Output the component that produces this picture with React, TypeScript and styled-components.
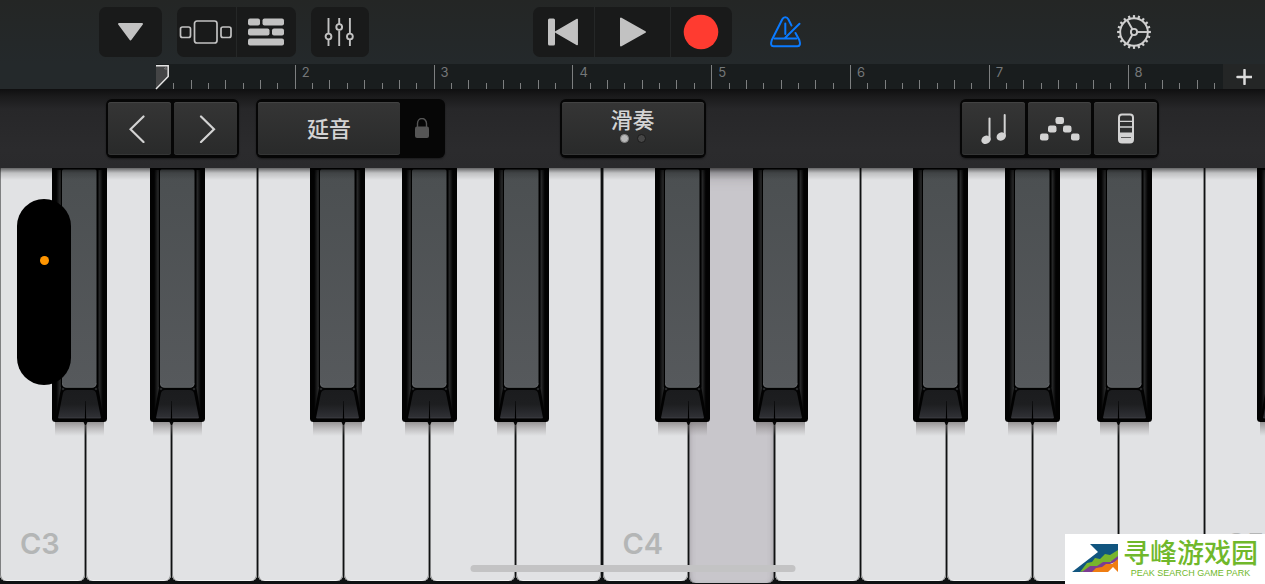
import React from "react";
import styled, { createGlobalStyle } from "styled-components";

const GlobalStyle = createGlobalStyle`
  * { box-sizing: border-box; }
  html, body, #root { height: 100%; margin: 0; }
  body {
    background: #111213;
    font-family: Inter, "Noto Sans CJK SC", "Liberation Sans", sans-serif;
    overflow: hidden;
  }
  button {
    margin: 0;
    padding: 0;
    border: 0;
    font: inherit;
    color: inherit;
    background: none;
    cursor: pointer;
  }
  svg { display: block; }
`;

const Screen = styled.main`
  position: relative;
  display: flex;
  flex-direction: column;
  height: 100vh;
  overflow: hidden;
`;

/* ---------- top toolbar ---------- */

const Toolbar = styled.header`
  flex: none;
  display: grid;
  grid-template-columns: 1fr auto 1fr;
  align-items: center;
  height: 64px;
  padding: 0 114px 0 99px;
  background: linear-gradient(#242625, #24292b);
  color: #c2c2c2;
`;

const ToolbarSide = styled.div`
  display: flex;
  align-items: center;
  gap: 15px;
`;

const ToolbarEnd = styled.div`
  display: flex;
  align-items: center;
  justify-content: space-between;
  padding-left: 37px;
`;

const ButtonGroup = styled.div<{ $shift?: boolean }>`
  display: flex;
  height: 50px;
  border-radius: 7px;
  overflow: hidden;
  background: #191a1a;
  margin-left: ${(p) => (p.$shift ? "15px" : "0")};
`;

const ToolButton = styled.button<{ $width: number }>`
  display: flex;
  align-items: center;
  justify-content: center;
  width: ${(p) => p.$width}px;
  & + & { border-left: 1px solid #252727; }
`;

const PlainButton = styled.button`
  display: flex;
  align-items: center;
  justify-content: center;
  width: 34px;
  height: 50px;
`;

/* ---------- ruler ---------- */

const RulerRow = styled.div`
  position: relative;
  flex: none;
  display: flex;
  height: 25px;
  padding-left: 156px;
  background: #24292b;
`;

const Timeline = styled.div`
  flex: 1;
  display: flex;
  background: #191d1e;
`;

const Bar = styled.div<{ $beats: number }>`
  position: relative;
  flex: ${(p) => p.$beats} 1 0;
  display: flex;
  align-items: flex-end;
`;

const Tick = styled.span<{ $height: number; $span: number }>`
  flex: ${(p) => p.$span} 1 0;
  height: ${(p) => p.$height}px;
  border-left: 1px solid #7d7f80;
`;

const BarNumber = styled.span`
  position: absolute;
  left: 7px;
  top: 0;
  font-size: 13px;
  line-height: 16px;
  color: #747778;
`;

const Playhead = styled.div`
  position: absolute;
  left: 155px;
  top: 0;
`;

const AddButton = styled.button`
  display: flex;
  align-items: center;
  justify-content: center;
  width: 42px;
  height: 25px;
  background: #242626;
  color: #dcdcdc;
`;

/* ---------- instrument controls ---------- */

const ControlBar = styled.section`
  flex: none;
  display: grid;
  grid-template-columns: 1fr auto 1fr;
  align-items: start;
  height: 79px;
  padding: 10px 106px 0;
  background: linear-gradient(#0f0f10, #1b1b1c 8px, #272729 20px, #2b2b2d 60px, #2a2a2c);
  color: #d3d3d3;
`;

const ControlSide = styled.div<{ $end?: boolean }>`
  display: flex;
  gap: 17px;
  justify-content: ${(p) => (p.$end ? "flex-end" : "flex-start")};
`;

const Frame = styled.div`
  display: flex;
  gap: 3px;
  height: 59px;
  padding: 3px 2px;
  border-radius: 6px;
  background: #060606;
  box-shadow: 0 1px 2px rgba(0, 0, 0, 0.4);
`;

const Pad = styled.button<{ $wide?: boolean }>`
  display: flex;
  flex-direction: column;
  align-items: center;
  justify-content: center;
  width: ${(p) => (p.$wide ? 142 : 63)}px;
  height: 53px;
  border-radius: 3px;
  background: linear-gradient(#353535, #292a2a);
  box-shadow: inset 0 1px 0 #434343, inset 0 -1px 0 #353636;
  font-size: 22px;
  line-height: 28px;
  font-weight: 500;
`;

const LockButton = styled.button`
  display: flex;
  align-items: center;
  justify-content: center;
  width: 40px;
  height: 53px;
  padding-right: 2px;
  color: #555;
`;

const Dots = styled.span`
  display: flex;
  gap: 8px;
  padding-bottom: 8px;
`;

const Dot = styled.span<{ $on?: boolean }>`
  width: 9px;
  height: 9px;
  border: 1px solid ${(p) => (p.$on ? "#858585" : "#1b1b1b")};
  border-radius: 50%;
  background: ${(p) => (p.$on ? "#b9b9b9" : "#464646")};
`;

/* ---------- keyboard ---------- */

const Keyboard = styled.section`
  position: relative;
  flex: 1;
  display: grid;
  grid-template-columns: 1205fr 1205fr 120fr;
  min-height: 0;
  overflow: hidden;
  background: #0f1112;
  &::after {
    content: "";
    position: absolute;
    inset: 0 0 auto;
    height: 12px;
    pointer-events: none;
    background: linear-gradient(rgba(0, 0, 0, 0.55), rgba(0, 0, 0, 0.15) 5px, transparent);
  }
`;

const Octave = styled.div<{ $partial?: boolean }>`
  position: relative;
  display: grid;
  grid-template-columns: ${(p) => (p.$partial ? "86px" : "repeat(7, 1fr)")};
  min-width: 0;
`;

const WhiteKey = styled.button<{ $pressed?: boolean }>`
  display: flex;
  align-items: flex-end;
  margin: 0 1px ${(p) => (p.$pressed ? 1 : 3)}px 0;
  padding: 0 20px 19px;
  border-radius: 0 0 6px 6px;
  background: ${(p) => (p.$pressed ? "#c8c6cb" : "#e1e2e4")};
  box-shadow: ${(p) =>
    p.$pressed
      ? "inset 1px 0 0 #6d6c70, inset -1px 0 0 #6d6c70, inset 4px 0 5px -3px #a5a3a8, inset -4px 0 5px -3px #a5a3a8, inset 0 16px 14px -8px #a19fa4"
      : "inset 1px 0 0 #7f8081, inset -1px 0 0 #8b8c8d, inset 0 -1px 0 #f5f5f5"};
  font-size: 29px;
  line-height: 36px;
  font-weight: 600;
  color: #b4b6b6;
`;

const BlackKey = styled.button<{ $left: number }>`
  position: absolute;
  top: 0;
  left: ${(p) => p.$left}%;
  width: 55px;
  height: 270px;
`;

/* ---------- overlays ---------- */

const CameraIsland = styled.div`
  position: absolute;
  left: 17px;
  top: 199px;
  width: 54px;
  height: 186px;
  border-radius: 27px;
  background: #000;
`;

const CameraDot = styled.span`
  position: absolute;
  left: 23px;
  top: 57px;
  width: 9px;
  height: 9px;
  border-radius: 50%;
  background: #ff9500;
`;

const HomeIndicator = styled.div`
  position: absolute;
  left: 50%;
  bottom: 12px;
  width: 325px;
  height: 7px;
  transform: translateX(-50%);
  border-radius: 4px;
  background: #c3c3c4;
`;

const Watermark = styled.aside`
  position: absolute;
  right: 0;
  bottom: 0;
  display: flex;
  gap: 4px;
  width: 200px;
  height: 50px;
  padding: 2px 0 0 7px;
  background: #fff;
  color: #70b82b;
`;

const WatermarkText = styled.div`
  display: flex;
  flex-direction: column;
  align-items: center;
  gap: 1px;
  white-space: nowrap;
`;

const WatermarkName = styled.strong`
  font: 500 27px/31px "Noto Sans CJK SC", sans-serif;
`;

const WatermarkTag = styled.span`
  font: 9px/10px "Liberation Sans", sans-serif;
`;

/* ---------- drawings ---------- */

const TriangleIcon = () => (
  <svg width="28" height="20" viewBox="0.500 0 28 20">
    <path d="M2.500 2h23L14 17.500z" fill="currentColor" stroke="currentColor" strokeWidth="2" strokeLinejoin="round" />
  </svg>
);

const BrowserIcon = () => (
  <svg width="56" height="26" viewBox="0 0 56 26" fill="none" stroke="currentColor" strokeWidth="1.700">
    <rect x="1.500" y="8" width="10" height="10.500" rx="2" />
    <rect x="15.500" y="2" width="22.500" height="22" rx="2.500" />
    <rect x="42" y="8" width="10" height="10.500" rx="2" />
  </svg>
);

const TracksIcon = () => (
  <svg width="38" height="28" viewBox="0 0 38 28" fill="currentColor">
    <rect width="12" height="7" y="0.500" rx="2" />
    <rect x="14.500" y="0.500" width="21.500" height="7" rx="2" />
    <rect y="10.500" width="21.500" height="7" rx="2" />
    <rect x="24" y="10.500" width="12" height="7" rx="2" />
    <rect y="20.500" width="36" height="7" rx="2" />
  </svg>
);

const MixerIcon = () => (
  <svg width="32" height="30" viewBox="0 0 32 30" fill="none" stroke="currentColor" strokeWidth="1.900">
    <path d="M4.500 1v15M4.500 22.500V29M15.200 1v6M15.200 13.500V29M25.900 1v15M25.900 22.500V29" />
    <circle cx="4.500" cy="19.500" r="2.900" />
    <circle cx="15.200" cy="10" r="2.900" />
    <circle cx="25.900" cy="19.500" r="2.900" />
  </svg>
);

const RewindIcon = () => (
  <svg width="34" height="28" viewBox="0 0 34 28" fill="currentColor">
    <rect x="1" y="0.500" width="7" height="27" rx="1.500" />
    <path d="M30.200 1.500v25L8.700 14z" stroke="currentColor" strokeWidth="1.500" strokeLinejoin="round" />
  </svg>
);

const PlayIcon = () => (
  <svg width="28" height="30" viewBox="0.500 0 28 30">
    <path d="M2.500 1.500v27L26.500 15z" fill="currentColor" stroke="currentColor" strokeWidth="2" strokeLinejoin="round" />
  </svg>
);

const RecordIcon = () => (
  <svg width="38" height="36" viewBox="0 0 38 36">
    <circle cx="18" cy="18" r="17.300" fill="#ff3b30" />
  </svg>
);

const MetronomeIcon = () => (
  <svg width="34" height="34" viewBox="0 0 34 34" fill="none" stroke="#0a7aff" strokeWidth="2" strokeLinecap="round" strokeLinejoin="round">
    <path d="M22.500 10.500 19.300 4.300Q18.300 2.300 16.300 2.300T13.300 4.300L2.800 25Q0.800 31.200 4.500 31.200H28.500Q32.300 31.200 30.300 25L26.500 18" />
    <path d="M5.500 23.500H27.500M16.300 8.500V19M16 23 30.500 8.800" />
  </svg>
);

const TEETH = Array.from({ length: 20 }, (_, i) => i * 18);

const GearIcon = () => (
  <svg width="34" height="34" viewBox="-17 -17 34 34" fill="none" stroke="#cfcfcf" strokeWidth="1.900">
    <circle r="13.800" />
    <circle r="3.100" />
    {TEETH.map((a) => (
      <path key={a} d="M14 0h2.900" strokeWidth="2.200" transform={`rotate(${a})`} />
    ))}
    {[0, 120, 240].map((a) => (
      <path key={a} d="M3.500 0H13.500" transform={`rotate(${a})`} />
    ))}
  </svg>
);

const PlayheadIcon = () => (
  <svg width="15" height="26" viewBox="0 0 15 26">
    <path d="M1 2h12v11L1 25z" fill="#444546" />
    <path d="M1 1.800h12.200v10.700L1 25" fill="none" stroke="#e4e4e4" strokeWidth="1.500" />
    <path d="M9 5 11 3.500V6" fill="none" stroke="#777" />
  </svg>
);

const PlusIcon = () => (
  <svg width="16" height="16" viewBox="0 0 16 16">
    <path d="M8.500 1v14M1.500 8h14" stroke="currentColor" strokeWidth="2.500" strokeLinecap="round" />
  </svg>
);

const ChevronIcon = ({ right }: { right?: boolean }) => (
  <svg width="22" height="28" viewBox="0 0 22 28" fill="none" stroke="currentColor" strokeWidth="2.200" strokeLinecap="round">
    <path d={right ? "M6 1.500 19 14.200 6 27" : "M14.500 1.500 1.500 14.200 14.500 27"} />
  </svg>
);

const LockIcon = () => (
  <svg width="16" height="22" viewBox="0 1 16 22">
    <path d="M3.500 10V6.500a4.500 5 0 0 1 9 0V10" fill="none" stroke="currentColor" strokeWidth="1.400" />
    <rect x="1" y="9.500" width="14" height="11.500" rx="2" fill="currentColor" />
  </svg>
);

const NotesIcon = () => (
  <svg width="28" height="32" viewBox="0 0 28 32" fill="currentColor">
    <path d="M9.500 5.500v21" stroke="currentColor" strokeWidth="2" strokeLinecap="round" />
    <ellipse cx="6" cy="26.800" rx="4.800" ry="4" transform="rotate(-28 6 26.800)" />
    <path d="M24.700 2v21" stroke="currentColor" strokeWidth="2" strokeLinecap="round" />
    <ellipse cx="21.200" cy="23.500" rx="4.800" ry="4" transform="rotate(-28 21.200 23.500)" />
  </svg>
);

const ArpeggioIcon = () => (
  <svg width="42" height="26" viewBox="0 0 42 26" fill="currentColor">
    {[
      [1, 17.5],
      [9, 9.5],
      [16.5, 1],
      [24, 9.5],
      [32, 17.5],
    ].map(([x, y]) => (
      <rect key={x} x={x} y={y} width="8.500" height="7" rx="2.200" />
    ))}
  </svg>
);

const KeyboardIcon = () => (
  <svg width="18" height="32" viewBox="0 0.500 18 32">
    <rect x="2" y="2" width="14" height="28" rx="3" fill="#2f3030" stroke="currentColor" strokeWidth="2" />
    <path d="M2 20h14v8q0 2-2 2H4q-2 0-2-2z" fill="currentColor" />
    <path d="M3 8.800h12M3 14.500h12" stroke="currentColor" strokeWidth="1.300" />
    <path d="M4 25h10" stroke="#5a5b5b" strokeWidth="1" />
  </svg>
);

const BlackKeyArt = ({ seam }: { seam: number }) => (
  <svg width="55" height="270" viewBox="0 0 55 270">
    <defs>
      <linearGradient id="keyFace" x1="0" y1="0" x2="0" y2="1">
        <stop offset="0" stopColor="#4b4f51" />
        <stop offset="1" stopColor="#56595c" />
      </linearGradient>
      <linearGradient id="keyFront" x1="0" y1="0" x2="0" y2="1">
        <stop offset="0" stopColor="#1b1c1e" />
        <stop offset="0.500" stopColor="#1d1e20" />
        <stop offset="1" stopColor="#303136" />
      </linearGradient>
      <linearGradient id="keySide" x1="0" x2="1">
        <stop offset="0" stopColor="#000" />
        <stop offset="1" stopColor="#303132" />
      </linearGradient>
      <linearGradient id="keySideRight" x1="0" x2="1">
        <stop offset="0" stopColor="#303132" />
        <stop offset="1" stopColor="#000" />
      </linearGradient>
      <linearGradient id="keyShadow" x1="0" y1="0" x2="0" y2="1">
        <stop offset="0" stopColor="#6c6768" stopOpacity="0.750" />
        <stop offset="1" stopColor="#8a8686" stopOpacity="0" />
      </linearGradient>
    </defs>
    <rect x="3" y="252" width="49" height="16" fill="url(#keyShadow)" />
    <path d="M0 0H55V250.500Q55 254 51.500 254H3.500Q0 254 0 250.500z" fill="#020202" />
    <path d="M4 2H9V220L4 247z" fill="url(#keySide)" />
    <path d="M46.500 2H51V247L46.500 220z" fill="url(#keySideRight)" />
    <path d="M9.500 1V219M45.500 1V219" stroke="#000" strokeWidth="1.500" />
    <path d="M10 3Q10 1.500 11.500 1.500H43Q44.500 1.500 44.500 3V215Q44.500 219.500 40 219.500H14.500Q10 219.500 10 215z" fill="url(#keyFace)" />
    <path d="M10.500 215Q10.500 219.300 15 219.300H40Q44 219.300 44 215" fill="none" stroke="#686c6f" strokeWidth="0.700" />
    <path d="M15 222H40Q43 222 44 225L49 250H6L11 225Q12 222 15 222z" fill="url(#keyFront)" />
    <path d="M6.500 250H48.500" stroke="#45464b" strokeWidth="0.700" />
    <circle cx="11" cy="221" r="1.300" fill="#252627" />
    <circle cx="44" cy="221" r="1.300" fill="#252627" />
    <path d={`M${seam + 0.3} 233h.4l.5 20h-1.400z`} fill="#000" />
    <path d={`M${seam - 2} 253h5L${seam + 1} 257h-1z`} fill="#050505" />
  </svg>
);

const PeakLogo = () => (
  <svg width="47" height="44" viewBox="0 0 47 44">
    <path d="M0 36 26 16 18 8H46V18L18 31 10 36z" fill="#11557f" />
    <path d="M8 36 15 27 20 26 23 22 28 23 33 18 38 19 46 14V22L38 26 30 29 20 33z" fill="#78b52c" />
    <path d="M10 36 18 30 25 30 31 26 38 26 46 20V25L38 28 30 32 22 36z" fill="#7d3d92" />
    <path d="M20 36 24 32 30 31 34 28 40 28 46 23V36L41 31 36 36z" fill="#ef7d12" />
  </svg>
);

/* ---------- page ---------- */

const BARS = [1, 2, 3, 4, 5, 6, 7];
const WHITE_NOTES = ["C", "D", "E", "F", "G", "A", "B"];
const BLACK_NOTES = [
  { note: "C#", left: 8.65, seam: 33 },
  { note: "D#", left: 24.95, seam: 21 },
  { note: "F#", left: 51.5, seam: 33 },
  { note: "G#", left: 66.75, seam: 27 },
  { note: "A#", left: 82.05, seam: 21 },
];

const Sharp = ({ note, octave, left, seam }: { note: string; octave: number; left: number; seam: number }) => (
  <BlackKey $left={left} aria-label={`${note}${octave}`}>
    <BlackKeyArt seam={seam} />
  </BlackKey>
);

const tickHeight = (i: number) => (i === 0 ? 24 : i % 2 ? 6 : 9);

export default function App() {
  return (
    <Screen>
      <GlobalStyle />
      <Toolbar>
        <ToolbarSide>
          <ButtonGroup>
            <ToolButton $width={63} aria-label="Menu"><TriangleIcon /></ToolButton>
          </ButtonGroup>
          <ButtonGroup>
            <ToolButton $width={59} aria-label="Browser"><BrowserIcon /></ToolButton>
            <ToolButton $width={60} aria-label="Tracks"><TracksIcon /></ToolButton>
          </ButtonGroup>
          <ButtonGroup>
            <ToolButton $width={58} aria-label="Mixer"><MixerIcon /></ToolButton>
          </ButtonGroup>
        </ToolbarSide>
        <ButtonGroup $shift>
          <ToolButton $width={61} aria-label="Rewind"><RewindIcon /></ToolButton>
          <ToolButton $width={76} aria-label="Play"><PlayIcon /></ToolButton>
          <ToolButton $width={62} aria-label="Record"><RecordIcon /></ToolButton>
        </ButtonGroup>
        <ToolbarEnd>
          <PlainButton aria-label="Metronome"><MetronomeIcon /></PlainButton>
          <PlainButton aria-label="Settings"><GearIcon /></PlainButton>
        </ToolbarEnd>
      </Toolbar>

      <RulerRow>
        <Timeline>
          {BARS.map((bar) => (
            <Bar key={bar} $beats={8}>
              {bar > 1 && <BarNumber>{bar}</BarNumber>}
              {Array.from({ length: 8 }, (_, i) => (
                <Tick key={i} $height={tickHeight(i)} $span={1} />
              ))}
            </Bar>
          ))}
          <Bar $beats={5.5}>
            <BarNumber>8</BarNumber>
            {Array.from({ length: 6 }, (_, i) => (
              <Tick key={i} $height={tickHeight(i)} $span={i === 5 ? 0.5 : 1} />
            ))}
          </Bar>
        </Timeline>
        <AddButton aria-label="Add section"><PlusIcon /></AddButton>
        <Playhead><PlayheadIcon /></Playhead>
      </RulerRow>

      <ControlBar>
        <ControlSide>
          <Frame>
            <Pad aria-label="Octave down"><ChevronIcon /></Pad>
            <Pad aria-label="Octave up"><ChevronIcon right /></Pad>
          </Frame>
          <Frame>
            <Pad $wide>延音</Pad>
            <LockButton aria-label="Lock"><LockIcon /></LockButton>
          </Frame>
        </ControlSide>
        <Frame>
          <Pad $wide>
            滑奏
            <Dots><Dot $on /><Dot /></Dots>
          </Pad>
        </Frame>
        <ControlSide $end>
          <Frame>
            <Pad aria-label="Scale"><NotesIcon /></Pad>
            <Pad aria-label="Arpeggiator"><ArpeggioIcon /></Pad>
            <Pad aria-label="Keyboard layout"><KeyboardIcon /></Pad>
          </Frame>
        </ControlSide>
      </ControlBar>

      <Keyboard>
        {[3, 4].map((octave) => (
          <Octave key={octave}>
            {WHITE_NOTES.map((note) => (
              <WhiteKey key={note} $pressed={octave === 4 && note === "D"} aria-label={`${note}${octave}`}>
                {note === "C" && `C${octave}`}
              </WhiteKey>
            ))}
            {BLACK_NOTES.map((k) => (
              <Sharp key={k.note} octave={octave} {...k} />
            ))}
          </Octave>
        ))}
        <Octave $partial>
          <WhiteKey>C5</WhiteKey>
          <Sharp note="C#" octave={5} left={87} seam={33} />
        </Octave>
      </Keyboard>

      <HomeIndicator />
      <CameraIsland><CameraDot /></CameraIsland>
      <Watermark>
        <PeakLogo />
        <WatermarkText>
          <WatermarkName>寻峰游戏园</WatermarkName>
          <WatermarkTag>PEAK SEARCH GAME PARK</WatermarkTag>
        </WatermarkText>
      </Watermark>
    </Screen>
  );
}
